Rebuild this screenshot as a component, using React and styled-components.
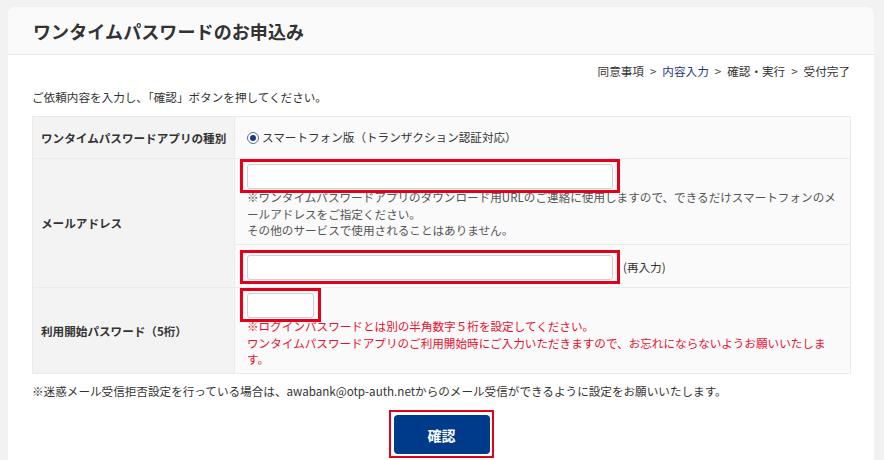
import React from "react";
import styled, { createGlobalStyle } from "styled-components";

const GlobalStyle = createGlobalStyle`
  html, body {
    margin: 0;
    padding: 0;
    background: #f2f2f2;
  }
  body {
    font-family: "Noto Sans CJK JP", "Noto Sans", sans-serif;
    color: #333;
  }
`;

const Page = styled.div`
  padding: 7px 10px 0 8px;
  height: 460px;
  box-sizing: border-box;
  overflow: hidden;
`;

const Card = styled.section`
  background: #fff;
  border-radius: 8px 8px 0 0;
  min-height: 460px;
`;

const CardHeader = styled.header`
  height: 47px;
  display: flex;
  align-items: center;
  padding: 0 25px;
  background: #fafafa;
  border-bottom: 1px solid #e8e8e8;
  border-radius: 8px 8px 0 0;

  h1 {
    margin: 0;
    font-size: 18px;
    font-weight: 700;
    color: #333;
    letter-spacing: 0.1px;
  }
`;

const CardBody = styled.div`
  padding: 6px 23px 0 24px;
  font-size: 11.6px;
`;

const Steps = styled.ol`
  list-style: none;
  margin: 0;
  padding: 0 1px 0 0;
  height: 20px;
  display: flex;
  justify-content: flex-end;
  align-items: center;
  color: #333;
`;

const Step = styled.li`
  color: ${(p) => (p.$current ? "#1d3a7c" : "#333")};
`;

const Sep = styled.li`
  margin: 0 6px;
  color: #444;
`;

const Lead = styled.p`
  margin: 6px 0 0;
  height: 20px;
  line-height: 20px;
`;

const FormTable = styled.table`
  margin-top: 9px;
  width: 100%;
  table-layout: fixed;
  border-collapse: collapse;
  border: 1px solid #ebebeb;

  th,
  td {
    border: 1px solid #ebebeb;
  }
`;

const Label = styled.th`
  width: 193px;
  background: #f3f3f3;
  text-align: left;
  font-weight: 700;
  padding: 0 0 0 8px;
  white-space: nowrap;
  color: #333;
  height: ${(p) => p.$h || "auto"};
`;

const Cell = styled.td`
  background: #fafafa;
  padding: ${(p) => p.$pad || "0 6px 0 12px"};
  height: ${(p) => p.$h || "auto"};
  vertical-align: ${(p) => p.$align || "middle"};
  line-height: 16.5px;
`;

const RadioLine = styled.label`
  display: flex;
  align-items: center;
  gap: 3px;
`;

const RadioMark = styled.span`
  width: 10px;
  height: 10px;
  border-radius: 50%;
  border: 1px solid #5a6f95;
  background: #fff;
  display: inline-flex;
  align-items: center;
  justify-content: center;

  &::after {
    content: "";
    width: 6px;
    height: 6px;
    border-radius: 50%;
    background: #173a85;
  }
`;

/* red annotation frame drawn over an element */
const Highlight = styled.div`
  position: relative;
  display: flex;
  width: fit-content;

  &::after {
    content: "";
    position: absolute;
    inset: ${(p) => p.$inset};
    border: ${(p) => p.$line || 3}px solid #e3001b;
    pointer-events: none;
  }
`;

const TextInput = styled.input`
  box-sizing: border-box;
  width: ${(p) => p.$w};
  height: 25px;
  border: 1px solid #cfcfcf;
  border-radius: 3px;
  background: #fff;
  font: inherit;
  padding: 0 6px;
  margin: 0;
  display: block;
`;

const InputRow = styled.div`
  display: flex;
  align-items: center;
  gap: 10px;
  color: #333;
`;

const Hint = styled.p`
  margin: 0;
  color: ${(p) => (p.$error ? "#e8102e" : "#555")};
  line-height: 16.5px;
`;

const Notice = styled.p`
  margin: 9px 0 0;
  line-height: 16px;
`;

const Actions = styled.div`
  display: flex;
  justify-content: center;
  padding-top: 16px;
`;

const ConfirmButton = styled.button`
  width: 96px;
  height: 39px;
  border: none;
  border-radius: 4px;
  background: #003a8a;
  color: #fff;
  font: inherit;
  font-size: 14px;
  font-weight: 700;
  cursor: pointer;
`;

const steps = ["同意事項", "内容入力", "確認・実行", "受付完了"];
const fieldFrame = "-5px -7px -4px -7px";

export default function App() {
  return (
    <Page>
      <GlobalStyle />
      <Card>
        <CardHeader>
          <h1>ワンタイムパスワードのお申込み</h1>
        </CardHeader>
        <CardBody>
          <Steps>
            {steps.map((s, i) => (
              <React.Fragment key={s}>
                {i > 0 && <Sep>&gt;</Sep>}
                <Step $current={i === 1}>{s}</Step>
              </React.Fragment>
            ))}
          </Steps>
          <Lead>ご依頼内容を入力し、「確認」ボタンを押してください。</Lead>

          <FormTable>
            <tbody>
              <tr>
                <Label $h="41px">ワンタイムパスワードアプリの種別</Label>
                <Cell>
                  <RadioLine>
                    <RadioMark />
                    スマートフォン版（トランザクション認証対応）
                  </RadioLine>
                </Cell>
              </tr>
              <tr>
                <Label rowSpan={2}>メールアドレス</Label>
                <Cell $h="80px" $align="top" $pad="5px 6px 0 12px">
                  <Highlight $inset={fieldFrame}>
                    <TextInput type="text" $w="366px" />
                  </Highlight>
                  <Hint>
                    ※ワンタイムパスワードアプリのダウンロード用URLのご連絡に使用しますので、できるだけスマートフォンのメールアドレスをご指定ください。
                    <br />
                    その他のサービスで使用されることはありません。
                  </Hint>
                </Cell>
              </tr>
              <tr>
                <Cell $h="39px" $pad="3px 6px 0 12px">
                  <InputRow>
                    <Highlight $inset={fieldFrame}>
                      <TextInput type="text" $w="366px" />
                    </Highlight>
                    (再入力)
                  </InputRow>
                </Cell>
              </tr>
              <tr>
                <Label>利用開始パスワード（5桁）</Label>
                <Cell $h="80px" $align="top" $pad="5px 6px 0 12px">
                  <Highlight $inset={fieldFrame}>
                    <TextInput type="password" $w="67px" />
                  </Highlight>
                  <Hint $error>
                    ※ログインパスワードとは別の半角数字５桁を設定してください。
                    <br />
                    ワンタイムパスワードアプリのご利用開始時にご入力いただきますので、お忘れにならないようお願いいたします。
                  </Hint>
                </Cell>
              </tr>
            </tbody>
          </FormTable>

          <Notice>
            ※迷惑メール受信拒否設定を行っている場合は、awabank@otp-auth.netからのメール受信ができるように設定をお願いいたします。
          </Notice>

          <Actions>
            <Highlight $inset="-5px -4px -4px -5px" $line={2}>
              <ConfirmButton type="button">確認</ConfirmButton>
            </Highlight>
          </Actions>
        </CardBody>
      </Card>
    </Page>
  );
}
